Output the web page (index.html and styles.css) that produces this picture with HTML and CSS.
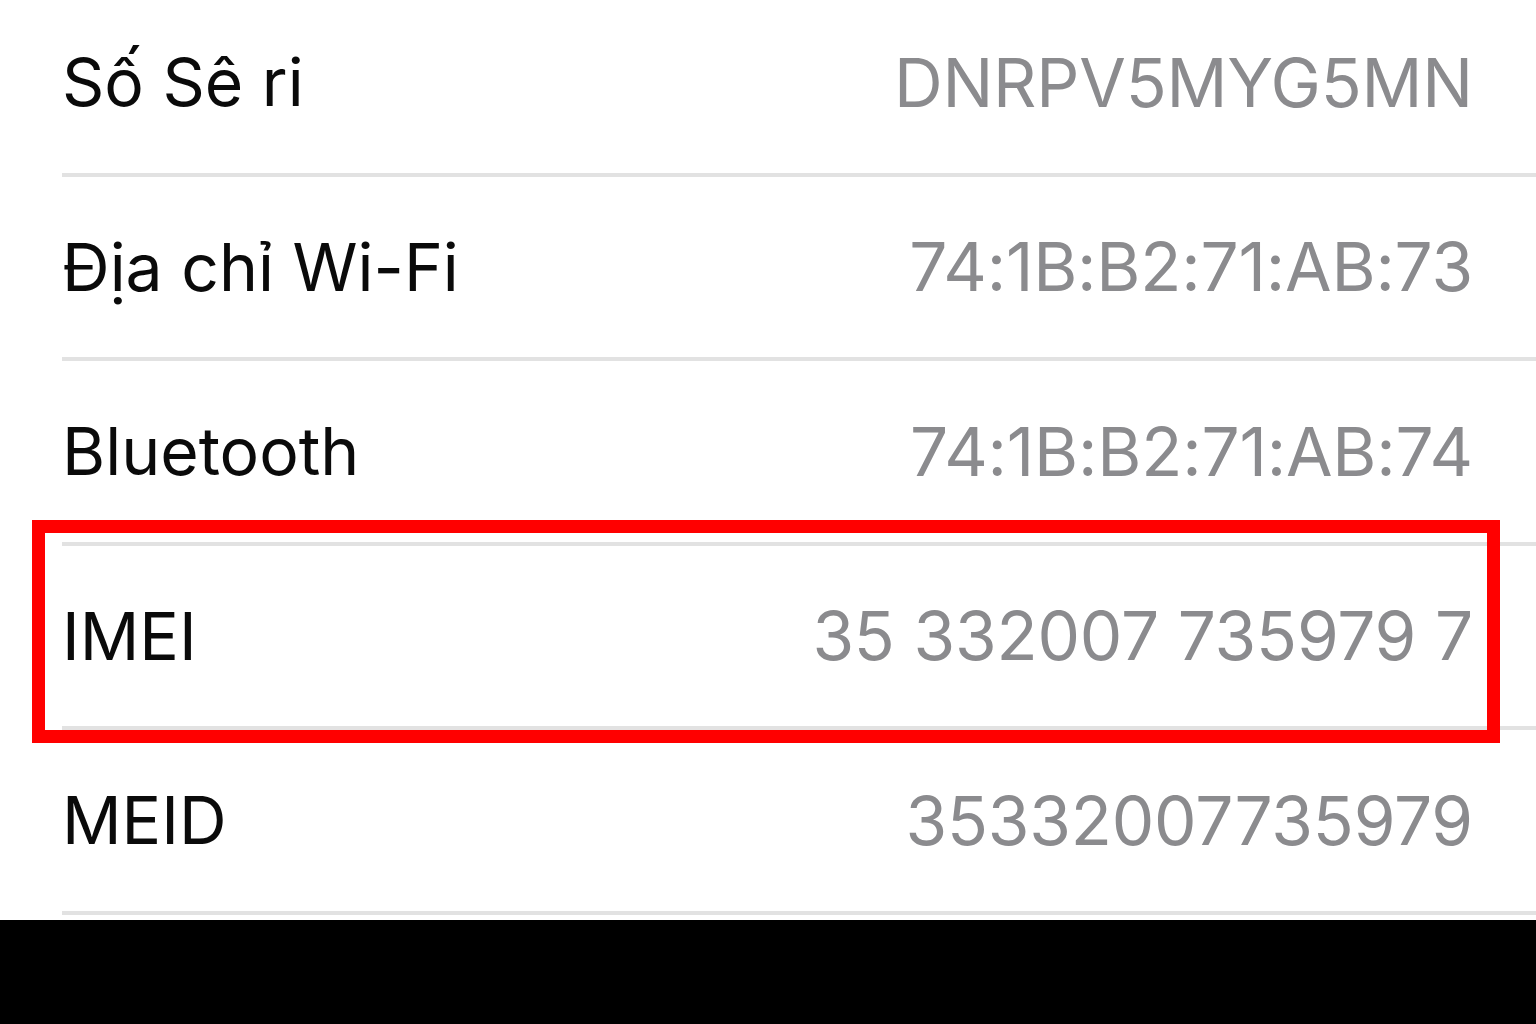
FILE: index.html
```html
<!DOCTYPE html>
<html lang="vi">
<head>
<meta charset="utf-8">
<title>Giới thiệu</title>
<link rel="stylesheet" href="styles.css">
</head>
<body>
<div class="screen">
  <ul class="list">
    <li class="row"><span class="label">Số Sê ri</span><span class="value">DNRPV5MYG5MN</span></li>
    <li class="row"><span class="label">Địa chỉ Wi-Fi</span><span class="value">74:1B:B2:71:AB:73</span></li>
    <li class="row"><span class="label">Bluetooth</span><span class="value">74:1B:B2:71:AB:74</span></li>
    <li class="row"><span class="label">IMEI</span><span class="value">35 332007 735979 7</span></li>
    <li class="row"><span class="label">MEID</span><span class="value">35332007735979</span></li>
  </ul>
  <div class="highlight"></div>
</div>
</body>
</html>
```

FILE: styles.css
```css
html, body {
  margin: 0;
  padding: 0;
  background: #000;
}

.screen {
  position: relative;
  width: 1536px;
  height: 920px;
  background: #fff;
  overflow: hidden;
  font-family: Inter, "Liberation Sans", Arial, sans-serif;
}

.list {
  list-style: none;
  margin: -8px 0 0 0;
  padding: 0;
}

.row {
  margin-left: 62px;
  padding: 0 63px 0 0;
  height: 180.5px;
  border-bottom: 4px solid #e2e2e2;
  display: flex;
  align-items: center;
  justify-content: space-between;
}

.label {
  font-size: 66px;
  color: #0a0a0a;
  letter-spacing: 0;
}

.value {
  font-size: 67.5px;
  color: #8b8b8e;
  letter-spacing: -0.2px;
}

.highlight {
  position: absolute;
  left: 32px;
  top: 520px;
  width: 1468px;
  height: 223px;
  box-sizing: border-box;
  border: 13px solid #ff0000;
}
```
